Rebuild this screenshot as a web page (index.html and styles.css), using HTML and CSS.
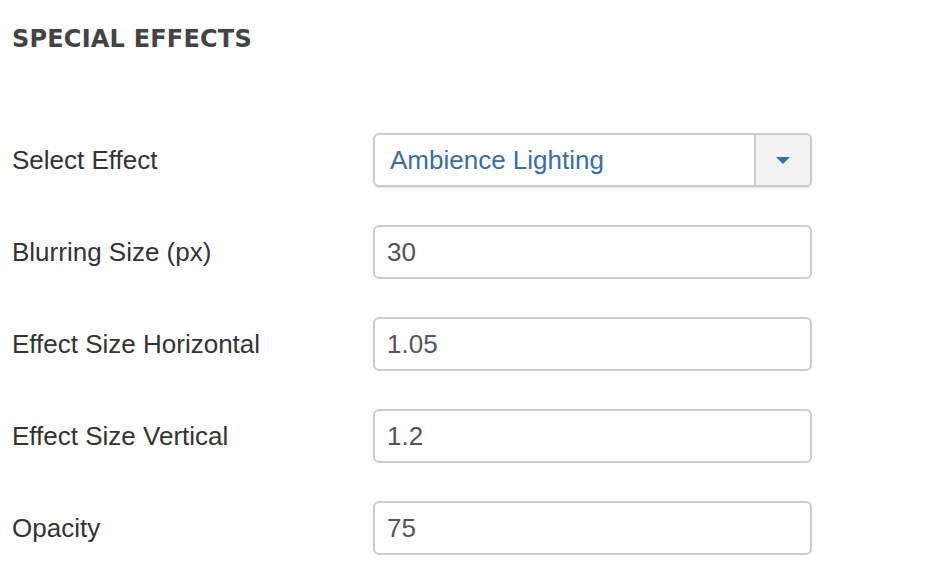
FILE: index.html
```html
<!DOCTYPE html>
<html lang="en">
<head>
  <meta charset="UTF-8" />
  <meta name="viewport" content="width=device-width, initial-scale=1.0" />
  <title>Special Effects</title>
  <link rel="stylesheet" href="styles.css">
</head>
<body>
  <div class="panel">
    <h2 class="panel-title">SPECIAL EFFECTS</h2>

    <div class="form-rows">
      <div class="form-row">
        <label class="form-label">Select Effect</label>
        <div class="select-box">
          <span class="select-value">Ambience Lighting</span>
          <span class="select-arrow"><span class="caret"></span></span>
        </div>
      </div>
      <div class="form-row">
        <label class="form-label">Blurring Size (px)</label>
        <input class="text-field" type="text" value="30">
      </div>
      <div class="form-row">
        <label class="form-label">Effect Size Horizontal</label>
        <input class="text-field" type="text" value="1.05">
      </div>
      <div class="form-row">
        <label class="form-label">Effect Size Vertical</label>
        <input class="text-field" type="text" value="1.2">
      </div>
      <div class="form-row">
        <label class="form-label">Opacity</label>
        <input class="text-field" type="text" value="75">
      </div>
    </div>
  </div>
</body>
</html>
```

FILE: styles.css
```css
body {
  margin: 0;
  background: #fff;
  font-family: "Liberation Sans", Arial, sans-serif;
  color: #333;
}
.panel {
  padding: 24px 0 0 12px;
}
.panel-title {
  margin: 0;
  font-family: "DejaVu Sans", sans-serif;
  font-weight: bold;
  font-size: 24px;
  line-height: 30px;
  color: #444;
  letter-spacing: 0.2px;
}
.form-rows {
  display: flex;
  flex-direction: column;
  gap: 38px;
  margin-top: 79px;
}
.form-row {
  display: flex;
  align-items: center;
  height: 54px;
}
.form-label {
  width: 361px;
  font-size: 26px;
  color: #333;
}
.text-field,
.select-box {
  box-sizing: border-box;
  width: 439px;
  height: 54px;
  border: 2px solid #ccc;
  border-radius: 6px;
  background: #fff;
}
.text-field {
  padding: 0 12px;
  font-family: "Liberation Sans", Arial, sans-serif;
  font-size: 26px;
  color: #555;
  outline: none;
}
.select-box {
  display: flex;
  align-items: stretch;
  box-shadow: 0 1px 2px rgba(0, 0, 0, 0.12);
}
.select-value {
  flex: 1;
  display: flex;
  align-items: center;
  padding-left: 15px;
  font-size: 26px;
  color: #3a6ea5;
}
.select-arrow {
  width: 54px;
  display: flex;
  align-items: center;
  justify-content: center;
  border-left: 2px solid #ccc;
  background: #f2f2f2;
  border-radius: 0 4px 4px 0;
}
.caret {
  width: 0;
  height: 0;
  border-left: 7px solid transparent;
  border-right: 7px solid transparent;
  border-top: 7px solid #3a6ea5;
}
```
